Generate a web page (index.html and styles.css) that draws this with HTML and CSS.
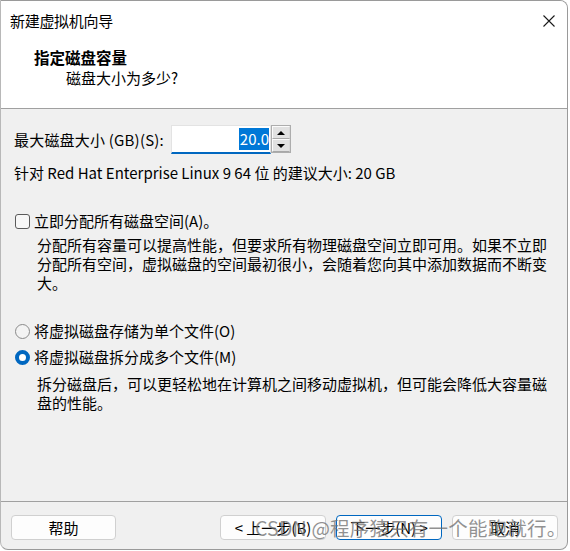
FILE: index.html
```html
<!DOCTYPE html>
<html lang="zh-CN">
<head>
<meta charset="utf-8">
<title>新建虚拟机向导</title>
<link rel="stylesheet" href="styles.css">
</head>
<body>
<div class="window">
  <div class="titlebar">
    <span class="title">新建虚拟机向导</span>
    <svg class="close" width="12" height="12" viewBox="0 0 12 12"><path d="M0.5 0.5 L11.5 11.5 M11.5 0.5 L0.5 11.5" stroke="#1a1a1a" stroke-width="1.1" fill="none"/></svg>
  </div>
  <div class="header">
    <div class="h-title">指定磁盘容量</div>
    <div class="h-sub">磁盘大小为多少?</div>
  </div>
  <div class="content">
    <div class="size-row">
      <span class="label">最大磁盘大小 (GB)(S):</span>
      <div class="input"><span class="sel">20.0</span></div>
      <div class="spin">
        <div class="spin-btn"><span class="tri-up"></span></div>
        <div class="spin-btn"><span class="tri-down"></span></div>
      </div>
    </div>
    <div class="line rec">针对 Red Hat Enterprise Linux 9 64 位 的建议大小: 20 GB</div>
    <div class="opt check-row"><span class="checkbox"></span><span>立即分配所有磁盘空间(A)。</span></div>
    <p class="desc d1">分配所有容量可以提高性能，但要求所有物理磁盘空间立即可用。如果不立即分配所有空间，虚拟磁盘的空间最初很小，会随着您向其中添加数据而不断变大。</p>
    <div class="opt radio-row r1"><span class="radio"></span><span>将虚拟磁盘存储为单个文件(O)</span></div>
    <div class="opt radio-row r2"><span class="radio on"></span><span>将虚拟磁盘拆分成多个文件(M)</span></div>
    <p class="desc d2">拆分磁盘后，可以更轻松地在计算机之间移动虚拟机，但可能会降低大容量磁盘的性能。</p>
  </div>
  <div class="footer">
    <button class="btn">帮助</button>
    <div class="btn-group">
      <button class="btn">&lt; 上一步(B)</button>
      <button class="btn default">下一步(N) &gt;</button>
      <button class="btn">取消</button>
    </div>
  </div>
  <div class="watermark">CSDN @程序猿只有一个能跑就行。</div>
</div>
</body>
</html>
```
FILE: styles.css
```css
* { box-sizing: border-box; }
html, body { margin: 0; padding: 0; background: #ffffff; }
body {
  font-family: "Noto Sans CJK SC", sans-serif;
  font-size: 15px;
  color: #000;
}
.window {
  position: relative;
  width: 568px;
  height: 550px;
  border: 1px solid #9a9a9a;
  border-left-color: #b8b8b8;
  border-radius: 0 8px 8px 8px;
  overflow: hidden;
  background: #f0f0f0;
  display: flex;
  flex-direction: column;
}
.titlebar {
  height: 40px;
  background: #fff;
  display: flex;
  align-items: center;
  justify-content: space-between;
  padding: 0 12px 0 9px;
}
.title { font-size: 15px; line-height: 20px; letter-spacing: -0.3px; }
.close { display: block; margin-top: -1px; }
.header {
  height: 68px;
  background: #fff;
  border-bottom: 1px solid #a0a0a0;
  padding: 6px 0 0 33px;
}
.h-title { font-weight: bold; font-size: 15.5px; line-height: 20px; }
.h-sub { margin-top: 1px; padding-left: 32px; line-height: 20px; }
.content {
  flex: 1;
  padding: 16px 13px 0 13px;
}
.size-row { display: flex; align-items: center; height: 29px; }
.label { width: 157px; line-height: 20px; letter-spacing: 0.2px; }
.input {
  width: 100px;
  height: 29px;
  background: #fff;
  border: 1px solid #e3e3e3;
  border-bottom: 2px solid #0067c0;
  display: flex;
  justify-content: flex-end;
  align-items: center;
  padding-right: 1px;
}
.sel {
  background: #0078d7;
  color: #fff;
  line-height: 22px;
  height: 22px;
  padding: 0 0 0 1px;
  font-size: 15px;
}
.spin {
  width: 20px;
  height: 28px;
  margin-bottom: 1px;
  border: 1px solid #adadad;
  display: flex;
  flex-direction: column;
  background: #e1e1e1;
}
.spin-btn {
  flex: 1;
  display: flex;
  align-items: center;
  justify-content: center;
  border: 1px solid #fbfbfb;
  border-right-color: #d8d8d8;
  border-bottom-color: #a8a8a8;
}
.tri-up, .tri-down { width: 0; height: 0; border-left: 4px solid transparent; border-right: 4px solid transparent; }
.tri-up { border-bottom: 4px solid #000; }
.tri-down { border-top: 4px solid #000; }
.line { line-height: 20px; }
.rec { margin-top: 9px; }
.opt { display: flex; align-items: center; height: 20px; line-height: 20px; gap: 4px; }
.check-row { margin-top: 28px; }
.checkbox {
  width: 15px;
  height: 15px;
  border: 1px solid #5a5a5a;
  border-radius: 3px;
  background: #f7f7f7;
  margin-left: 1px;
}
.desc {
  margin: 0;
  width: 540px;
  padding-left: 23px;
  line-height: 19px;
}
.d1 { margin-top: 4px; }
.r1 { margin-top: 29px; }
.r2 { margin-top: 6px; }
.radio {
  width: 15px;
  height: 15px;
  border: 1px solid #8a8a8a;
  border-radius: 50%;
  background: #f3f3f3;
  margin-left: 1px;
}
.radio.on {
  border: 4px solid #0067c0;
  background: #fff;
}
.d2 { margin-top: 7px; }
.footer {
  height: 48px;
  border-top: 1px solid #a0a0a0;
  display: flex;
  justify-content: space-between;
  align-items: flex-start;
  padding: 13px 9px 0 10px;
}
.btn-group { display: flex; gap: 10px; }
.btn {
  font-family: inherit;
  font-size: 15px;
  color: #000;
  width: 105px;
  height: 25px;
  padding: 0;
  line-height: 21px;
  background: #fdfdfd;
  border: 1px solid #d0d0d0;
  border-radius: 4px;
}
.btn-group .btn { width: 106px; }
.btn.default { border-color: #0067c0; }
.watermark {
  position: absolute;
  left: 254px;
  top: 514px;
  font-size: 19.5px;
  line-height: 26px;
  color: rgba(110, 110, 110, 0.75);
  white-space: nowrap;
  pointer-events: none;
  letter-spacing: 0.2px;
}
```
